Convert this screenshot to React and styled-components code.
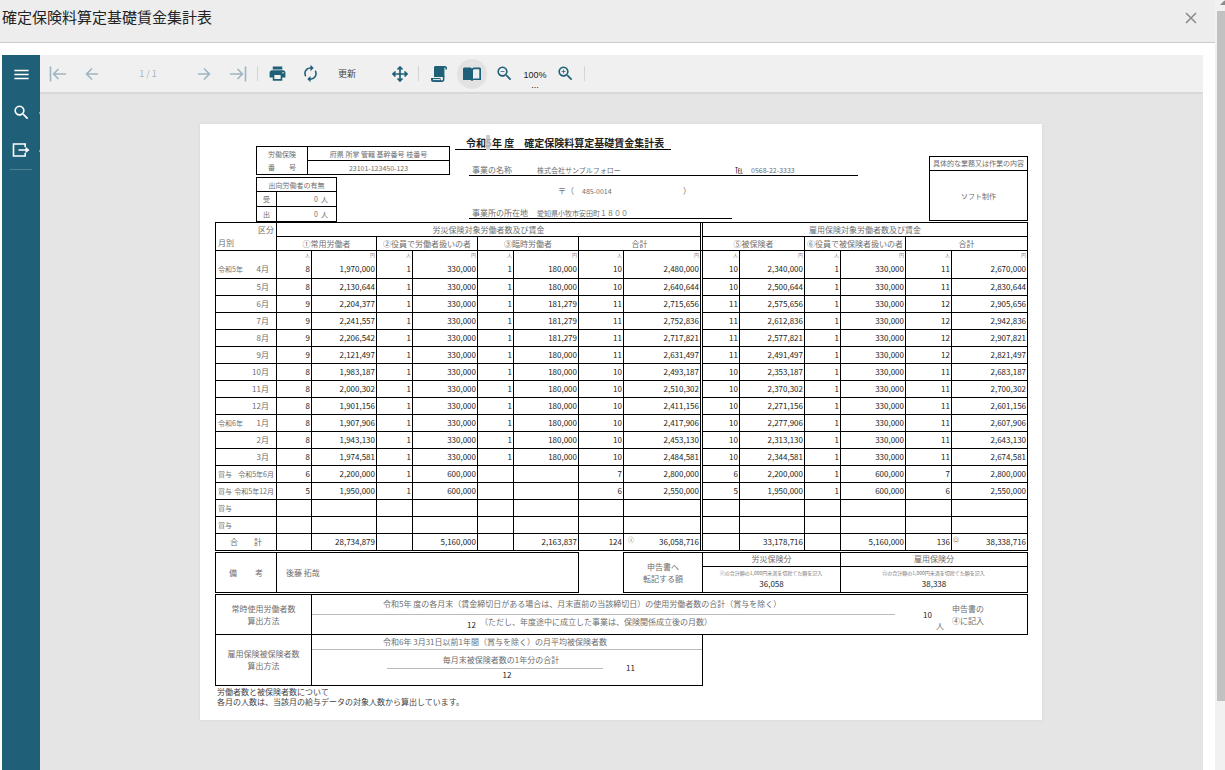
import React from "react";
import styled, { createGlobalStyle } from "styled-components";
import { MdPrint, MdAutorenew, MdMenu, MdSearch, MdOutlineZoomIn, MdOutlineZoomOut } from "react-icons/md";

//*********************************************************
// Data
//*********************************************************
const COLUMNS = [61, 35, 65, 36, 65, 36, 65, 45, 77, 2, 37, 65, 36, 65, 46, 76];

const MONTHS = [
	["令和5年", "4月", "8", "1,970,000", "1", "330,000", "1", "180,000", "10", "2,480,000", "10", "2,340,000", "1", "330,000", "11", "2,670,000"],
	["", "5月", "8", "2,130,644", "1", "330,000", "1", "180,000", "10", "2,640,644", "10", "2,500,644", "1", "330,000", "11", "2,830,644"],
	["", "6月", "9", "2,204,377", "1", "330,000", "1", "181,279", "11", "2,715,656", "11", "2,575,656", "1", "330,000", "12", "2,905,656"],
	["", "7月", "9", "2,241,557", "1", "330,000", "1", "181,279", "11", "2,752,836", "11", "2,612,836", "1", "330,000", "12", "2,942,836"],
	["", "8月", "9", "2,206,542", "1", "330,000", "1", "181,279", "11", "2,717,821", "11", "2,577,821", "1", "330,000", "12", "2,907,821"],
	["", "9月", "9", "2,121,497", "1", "330,000", "1", "180,000", "11", "2,631,497", "11", "2,491,497", "1", "330,000", "12", "2,821,497"],
	["", "10月", "8", "1,983,187", "1", "330,000", "1", "180,000", "10", "2,493,187", "10", "2,353,187", "1", "330,000", "11", "2,683,187"],
	["", "11月", "8", "2,000,302", "1", "330,000", "1", "180,000", "10", "2,510,302", "10", "2,370,302", "1", "330,000", "11", "2,700,302"],
	["", "12月", "8", "1,901,156", "1", "330,000", "1", "180,000", "10", "2,411,156", "10", "2,271,156", "1", "330,000", "11", "2,601,156"],
	["令和6年", "1月", "8", "1,907,906", "1", "330,000", "1", "180,000", "10", "2,417,906", "10", "2,277,906", "1", "330,000", "11", "2,607,906"],
	["", "2月", "8", "1,943,130", "1", "330,000", "1", "180,000", "10", "2,453,130", "10", "2,313,130", "1", "330,000", "11", "2,643,130"],
	["", "3月", "8", "1,974,581", "1", "330,000", "1", "180,000", "10", "2,484,581", "10", "2,344,581", "1", "330,000", "11", "2,674,581"]
];

const BONUSES = [
	["賞与", "令和5年6月", "6", "2,200,000", "1", "600,000", "", "", "7", "2,800,000", "6", "2,200,000", "1", "600,000", "7", "2,800,000"],
	["賞与", "令和5年12月", "5", "1,950,000", "1", "600,000", "", "", "6", "2,550,000", "5", "1,950,000", "1", "600,000", "6", "2,550,000"],
	["賞与", "", "", "", "", "", "", "", "", "", "", "", "", "", "", ""],
	["賞与", "", "", "", "", "", "", "", "", "", "", "", "", "", "", ""]
];

const TOTALS = ["", "28,734,879", "", "5,160,000", "", "2,163,837", "124", "36,058,716", "", "33,178,716", "", "5,160,000", "136", "38,338,716"];

//*********************************************************
// Styles
//*********************************************************
const GlobalStyle = createGlobalStyle`
	* {
		box-sizing: border-box;
	}

	body {
		margin: 0;
		background: #fff;
		font-family: "Noto Sans CJK JP", "Noto Sans", sans-serif;
	}

	button,
	input {
		margin: 0;
		padding: 0;
		border: 0;
		background: none;
		font-family: inherit;
	}
`;

const Screen = styled.div`
	display: flex;
	height: 100vh;
	overflow: hidden;
`;

const Dialog = styled.main`
	display: flex;
	flex: 1;
	flex-direction: column;
	min-width: 0;
`;

const DialogHeader = styled.header`
	display: flex;
	align-items: flex-start;
	justify-content: space-between;
	height: 43px;
	padding: 6px 18px 0 2px;
	background: #ededed;
	border-bottom: 1px solid #ccc;
`;

const DialogTitle = styled.h1`
	margin: 0;
	font-size: 15px;
	font-weight: 400;
	line-height: 22px;
	color: #222;
`;

const CloseButton = styled.button`
	display: flex;
	padding: 6px 0;
	color: #8c8c8c;
`;

const ScrollRail = styled.div`
	display: flex;
	flex-direction: column;
	width: 10px;
	padding-left: 2px;
	background: #f1f1f1;
	overflow: hidden;
`;

const ScrollArrow = styled.svg`
	flex: none;
	width: 8px;
	height: 11px;
`;

const ScrollThumb = styled.div`
	flex: 10;
	background: #c1c1c1;
`;

const ScrollRest = styled.div`
	flex: 1;
`;

const Viewer = styled.div`
	display: flex;
	flex: 1;
	min-height: 0;
	margin: 12px 12px 0 2px;
`;

const Sidebar = styled.nav`
	display: flex;
	flex-direction: column;
	align-items: center;
	width: 38px;
	background: #205f78;
`;

const SideButton = styled.button`
	position: relative;
	display: flex;
	align-items: center;
	justify-content: center;
	width: 38px;
	height: 38px;
	color: #fff;

	&::after {
		content: "";
		position: absolute;
		right: 0;
		bottom: 17px;
		width: 1px;
		height: 2px;
		background: ${({ $more }) => ($more ? "#7fa5b3" : "transparent")};
	}
`;

const SideRule = styled.div`
	width: 22px;
	height: 1px;
	background: #4f8296;
`;

const Pane = styled.div`
	display: flex;
	flex: 1;
	flex-direction: column;
	min-width: 0;
`;

const Toolbar = styled.div`
	display: flex;
	align-items: center;
	height: 39px;
	padding-left: 1px;
	background: #f0f0f0;
	border-bottom: 2px solid #d8d8d8;
`;

const ToolButton = styled.button`
	display: flex;
	flex: none;
	align-items: center;
	justify-content: center;
	width: ${({ $nav }) => ($nav ? "34px" : "33px")};
	height: 30px;
	color: #205f78;

	&:disabled {
		color: #9db6c1;
	}
`;

const RoundMark = styled.span`
	display: flex;
	flex: none;
	align-items: center;
	justify-content: center;
	width: 30px;
	height: 30px;
	border-radius: 50%;
	background: #e2e2e2;
`;

const PageInput = styled.input`
	width: 78px;
	font-size: 9px;
	line-height: 12px;
	text-align: center;
	color: #a9b3b8;
`;

const RefreshButton = styled.button`
	width: 56px;
	padding-left: 11px;
	font-size: 9px;
	line-height: 12px;
	text-align: left;
	color: #444;
`;

const ZoomButton = styled.button`
	width: 28px;
	padding-top: 10px;
	font-family: "Liberation Sans", Arial, sans-serif;
	font-size: 9px;
	line-height: 12px;
	color: #222;
`;

const ZoomMore = styled.span`
	display: block;
	line-height: 8px;
`;

const Divider = styled.div`
	width: 1px;
	height: 15px;
	margin: 0 3px 0 2px;
	background: #d0d5d7;
`;

const Canvas = styled.div`
	flex: 1;
	min-height: 0;
	padding: 30px 1px 0 0;
	background: #e5e5e5;
	overflow: hidden;
`;

const Sheet = styled.article`
	width: 100%;
	max-width: 842px;
	min-height: 596px;
	margin: 0 auto;
	padding: 0 14px 0 15px;
	background: #fff;
	box-shadow: 0 0 3px #d4d4d4;
	font-size: 8px;
	line-height: 12px;
	color: #6e6e6e;
	white-space: nowrap;
`;

const SheetHead = styled.div`
	display: flex;
	height: 98px;
	padding-left: 41px;
`;

const HeadLeft = styled.div`
	width: 194px;
	padding-top: 22px;
`;

const SmallTable = styled.table`
	width: ${({ $narrow }) => ($narrow ? "81px" : "100%")};
	margin-bottom: 2px;
	border: solid #000;
	border-width: 1px 0 0 1px;
	border-spacing: 0;
	table-layout: fixed;
	font-size: 7px;
	line-height: 12px;

	th,
	td {
		height: ${({ $narrow }) => ($narrow ? "15px" : "14px")};
		padding: 0;
		border: solid #000;
		border-width: 0 1px 1px 0;
		font-weight: 400;
		text-align: center;
	}

	th[colspan] {
		height: 14px;
	}

	th:first-child:not([colspan]) {
		width: ${({ $narrow }) => ($narrow ? "20px" : "51px")};
		line-height: 13px;
	}
`;

const PeopleCell = styled.td`
	&& {
		padding-right: 8px;
		text-align: right;
	}
`;

const HeadCenter = styled.div`
	flex: 1;
	min-width: 0;
	padding-left: 5px;
`;

const SheetTitle = styled.h2`
	width: 216px;
	margin: 0;
	padding: 12px 0 0 11px;
	border-bottom: 1px solid #000;
	font-size: 10px;
	font-weight: 700;
	line-height: 13px;
	color: #222;
`;

const YearMark = styled.mark`
	background: linear-gradient(90deg, #ccc 70%, transparent 70%);
	color: #aaa;
`;

const Field = styled.div`
	display: flex;
	align-items: flex-end;
	width: ${({ $short }) => ($short ? "263px" : "389px")};
	height: ${({ $short }) => ($short ? "23px" : "26px")};
	margin-left: 14px;
	padding-left: 3px;
	border-bottom: 1px solid #000;
	line-height: 10px;
`;

const FieldLabel = styled.span`
	width: 65px;
`;

const FieldValue = styled.span`
	width: ${({ $wide }) => ($wide ? "198px" : "auto")};
	font-size: 7px;
`;

const TelMark = styled.span`
	width: 16px;
	color: #111;
`;

const Postal = styled.div`
	display: flex;
	margin: 10px 0 0 103px;
	line-height: 10px;
`;

const PostalCode = styled.span`
	width: 109px;
	padding-left: 8px;
	font-size: 7px;
`;

const WorkBox = styled.section`
	display: flex;
	flex-direction: column;
	width: 99px;
	height: 65px;
	margin-top: 32px;
	border: 1px solid #000;
	font-size: 7px;
	text-align: center;
`;

const WorkTitle = styled.div`
	height: 14px;
	border-bottom: 1px solid #000;
`;

const WorkBody = styled.div`
	display: flex;
	flex: 1;
	align-items: center;
	justify-content: center;
`;

const WageTable = styled.table`
	width: 100%;
	border: solid #000;
	border-width: 1px 0 0 1px;
	border-spacing: 0;
	table-layout: fixed;

	th,
	td {
		height: 17px;
		padding: 0 1px;
		border: solid #000;
		border-width: 0 1px 1px 0;
		font-weight: 400;
	}

	thead th {
		height: 14px;
		padding: 0;
	}
`;

const CornerHead = styled.th`
	line-height: 13px;
	vertical-align: top;
`;

const CornerText = styled.div`
	padding: 0 2px;
	text-align: ${({ $align }) => $align};
`;

const PeriodHead = styled.th`
	vertical-align: ${({ $first }) => ($first ? "bottom" : "middle")};
`;

const Period = styled.div`
	display: flex;
	justify-content: space-between;
	padding: ${({ $first }) => ($first ? "0 0 3px 1px" : "0 0 0 1px")};
	font-size: 7px;
`;

const MonthName = styled.span`
	padding-right: ${({ $bonus }) => ($bonus ? "1px" : "6px")};
	font-size: ${({ $bonus }) => ($bonus ? "7px" : "8px")};
`;

const TotalLabel = styled.div`
	display: flex;
	justify-content: space-between;
	padding: 0 13px;
`;

const NumberCell = styled.td`
	text-align: right;
	color: #1c1c1c;
`;

const Unit = styled.div`
	margin-bottom: 4px;
	font-size: 5px;
	line-height: 8px;
	color: #888;
`;

const FirstValue = styled.div`
	margin-bottom: 3px;
`;

const MarkedValue = styled.div`
	display: flex;
	justify-content: space-between;
`;

const CircleMark = styled.span`
	padding-left: ${({ $inset }) => ($inset ? "3px" : "0")};
	font-size: 6px;
	line-height: 8px;
	color: #666;
`;

const Summary = styled.div`
	display: grid;
	grid-template-columns: 364fr 44fr 405fr;
	margin-top: 1px;
`;

const RemarkBox = styled.div`
	display: flex;
	align-items: stretch;
	height: 41px;
	border: 1px solid #000;
	line-height: 39px;
`;

const RemarkLabel = styled.div`
	display: flex;
	justify-content: space-between;
	width: 61px;
	padding: 0 13px;
	border-right: 1px solid #000;
`;

const RemarkText = styled.div`
	padding-left: 9px;
	font-size: 8px;
`;

const TransferBox = styled.div`
	display: grid;
	grid-column: 3;
	grid-template-columns: 78fr 138fr 187fr;
	height: 41px;
	border: 1px solid #000;
	text-align: center;
`;

const TransferLabel = styled.div`
	display: flex;
	flex-direction: column;
	justify-content: center;
`;

const TransferAmount = styled.div`
	border-left: 1px solid #000;
	color: #1c1c1c;
`;

const TransferHead = styled.div`
	height: 14px;
	border-bottom: 1px solid #000;
	color: #6e6e6e;
`;

const TransferNote = styled.div`
	padding-right: 1px;
	font-size: 5px;
	line-height: 11px;
	color: #777;
`;

const Method = styled.div`
	display: flex;
	width: ${({ $half }) => ($half ? "60%" : "100%")};
	height: ${({ $half }) => ($half ? "51px" : "41px")};
	margin-top: ${({ $half }) => ($half ? "0" : "1px")};
	border: 1px solid #000;
	border-top-width: ${({ $half }) => ($half ? "0" : "1px")};
`;

const MethodLabel = styled.div`
	display: flex;
	flex: none;
	flex-direction: column;
	justify-content: center;
	width: 96px;
	border-right: 1px solid #000;
	text-align: center;
`;

const MethodBody = styled.div`
	flex: 1;
	min-width: 0;
`;

const Condition = styled.div`
	height: ${({ $low }) => ($low ? "15px" : "20px")};
	padding-left: 71px;
	border-bottom: 1px solid #bbb;
	line-height: ${({ $low }) => ($low ? "13px" : "18px")};
`;

const Divisor = styled.div`
	display: flex;
	gap: 4px;
	padding-left: 155px;
	line-height: 13px;
`;

const Figure = styled.span`
	padding-top: ${({ $drop }) => ($drop ? "3px" : "0")};
	color: #1c1c1c;
`;

const Result = styled.div`
	display: flex;
	flex: none;
	align-items: center;
	gap: 4px;
	width: 132px;
	padding-left: 28px;
`;

const ResultUnit = styled.span`
	align-self: flex-end;
	padding: 0 4px 2px 0;
`;

const FormulaRow = styled.div`
	display: flex;
	align-items: center;
	gap: 23px;
	height: 35px;
	padding-left: 75px;
`;

const Fraction = styled.div`
	width: 216px;
	text-align: center;
`;

const FractionTop = styled.div`
	height: 18px;
	padding-left: 12px;
	border-bottom: 1px solid #bbb;
	line-height: 17px;
`;

const FractionBottom = styled.div`
	height: 16px;
	padding-left: 24px;
	color: #1c1c1c;
`;

const Notes = styled.p`
	margin: 1px 0 0;
	padding-left: 2px;
	line-height: 10px;
	color: #444;
`;

//*********************************************************
// Icons
//*********************************************************
const ArrowIcon = ({ back, edge }) => (
	<svg
		width="18"
		height="18"
		viewBox="0 0 18 18"
		fill="none"
		stroke="currentColor"
		strokeWidth="1.6"
		transform={back ? undefined : "scale(-1 1)"}
	>
		{edge ? <path d="M1.5 1.5v15M17 9H4.5M9.5 4l-5 5 5 5"/> : <path d="M15 9H4M9 3.5L3.5 9 9 14.5"/>}
	</svg>
);

const MoveIcon = () => (
	<svg width="16" height="16" viewBox="0 0 16 16" fill="none" stroke="currentColor" strokeWidth="1.7">
		<path d="M8 1.5v13M1.5 8h13M5.5 3.5L8 1l2.5 2.5M5.5 12.5L8 15l2.5-2.5M3.5 5.5L1 8l2.5 2.5M12.5 5.5L15 8l-2.5 2.5"/>
	</svg>
);

const ScrollIcon = () => (
	<svg width="16" height="16" viewBox="0 0 16 16" fill="currentColor">
		<path d="M4.5 0H14a2 2 0 0 1 2 2v1.6h-1.6V2c0-.4-.2-.6-.5-.6s-.5.2-.5.6v9H3V1.5C3 .6 3.6 0 4.500 0z"/>
		<path d="M0 12h9.500v1.200c0 .7.5 1.200 1.200 1.200s1.200-.5 1.200-1.200V10h1.500v3.200A2.600 2.600 0 0 1 10.800 16H2.500A2.500 2.500 0 0 1 0 13.500z"/>
		<path d="M2 13.600h7" stroke="#f0f0f0" strokeWidth="1"/>
	</svg>
);

const BookIcon = () => (
	<svg width="18" height="14" viewBox="0 0 18 14">
		<path d="M1.500.5H7.500L9 1.500 10.500.5h6c.8 0 1.500.6 1.500 1.400V13h-7.500L9 14l-1.500-1H0V1.900C0 1.100.7.5 1.500.5z" fill="currentColor"/>
		<path d="M10 3.100l1-.8h5.300v9.200H11l-1 .5z" fill="#e9eef0"/>
	</svg>
);

const ExportIcon = () => (
	<svg width="18" height="14" viewBox="0 0 18 14" fill="none" stroke="currentColor" strokeWidth="1.600">
		<path d="M13.200 4V1H1.500v12h11.700v-3M6.500 7H16"/>
		<path d="M13.500 3.800L17.500 7l-4 3.200z" fill="currentColor" stroke="none"/>
	</svg>
);

//*********************************************************
// Components
//*********************************************************
const TopBar = () => (
	<Toolbar>
		<ToolButton $nav disabled aria-label="最初のページ"><ArrowIcon back edge/></ToolButton>
		<ToolButton $nav disabled aria-label="前のページ"><ArrowIcon back/></ToolButton>
		<PageInput type="text" aria-label="ページ" value="1 / 1" readOnly/>
		<ToolButton $nav disabled aria-label="次のページ"><ArrowIcon/></ToolButton>
		<ToolButton $nav disabled aria-label="最後のページ"><ArrowIcon edge/></ToolButton>
		<Divider/>
		<ToolButton aria-label="印刷"><MdPrint size={19}/></ToolButton>
		<ToolButton aria-label="再読み込み"><MdAutorenew size={19}/></ToolButton>
		<RefreshButton>更新</RefreshButton>
		<ToolButton aria-label="移動"><MoveIcon/></ToolButton>
		<Divider/>
		<ToolButton aria-label="連続表示"><ScrollIcon/></ToolButton>
		<ToolButton aria-label="見開き表示"><RoundMark><BookIcon/></RoundMark></ToolButton>
		<ToolButton aria-label="縮小"><MdOutlineZoomOut size={19}/></ToolButton>
		<ZoomButton>100%<ZoomMore>...</ZoomMore></ZoomButton>
		<ToolButton aria-label="拡大"><MdOutlineZoomIn size={19}/></ToolButton>
		<Divider/>
	</Toolbar>
);

const WageRow = ({ row, first, bonus }) => {
	const [period, month, ...values] = row;
	const cells = values.map((value, i) => (
		<NumberCell key={i}>
			{first ? (
				<>
					<Unit>{i % 2 ? "円" : "人"}</Unit>
					<FirstValue>{value}</FirstValue>
				</>
			) : value}
		</NumberCell>
	));

	return (
		<tr>
			<PeriodHead scope="row" $first={first}>
				<Period $first={first}>
					<span>{period}</span>
					<MonthName $bonus={bonus}>{month}</MonthName>
				</Period>
			</PeriodHead>
			{cells.slice(0, 8)}
			{first && <td rowSpan={17}/>}
			{cells.slice(8)}
		</tr>
	);
};

const totalCell = (value, i) => {
	if (i !== 7 && i !== 13) {
		return <NumberCell key={i}>{value}</NumberCell>;
	}
	return (
		<NumberCell key={i}>
			<MarkedValue>
				<CircleMark $inset={i === 7}>{i === 7 ? "㋑" : "㋺"}</CircleMark>
				<span>{value}</span>
			</MarkedValue>
		</NumberCell>
	);
};

const Wages = () => (
	<WageTable>
		<colgroup>
			{COLUMNS.map((width, i) => <col key={i} width={width}/>)}
		</colgroup>
		<thead>
			<tr>
				<CornerHead rowSpan={2}>
					<CornerText $align="right">区分</CornerText>
					<CornerText $align="left">月別</CornerText>
				</CornerHead>
				<th colSpan={8}>労災保険対象労働者数及び賃金</th>
				<th rowSpan={2}/>
				<th colSpan={6}>雇用保険対象労働者数及び賃金</th>
			</tr>
			<tr>
				<th colSpan={2}>①常用労働者</th>
				<th colSpan={2}>②役員で労働者扱いの者</th>
				<th colSpan={2}>③臨時労働者</th>
				<th colSpan={2}>合計</th>
				<th colSpan={2}>⑤被保険者</th>
				<th colSpan={2}>⑥役員で被保険者扱いの者</th>
				<th colSpan={2}>合計</th>
			</tr>
		</thead>
		<tbody>
			{MONTHS.map((row, i) => <WageRow key={row[1]} row={row} first={i === 0}/>)}
			{BONUSES.map((row, i) => <WageRow key={i} row={row} bonus/>)}
			<tr>
				<th scope="row"><TotalLabel><span>合</span><span>計</span></TotalLabel></th>
				{TOTALS.map(totalCell)}
			</tr>
		</tbody>
	</WageTable>
);

const ReportHead = () => (
	<SheetHead>
		<HeadLeft>
			<SmallTable>
				<tbody>
					<tr>
						<th rowSpan={2}>労働保険<br/>番　　号</th>
						<td>府県 所掌 管轄 基幹番号 枝番号</td>
					</tr>
					<tr><td>23101-123450-123</td></tr>
				</tbody>
			</SmallTable>
			<SmallTable $narrow>
				<tbody>
					<tr><th colSpan={4}>出向労働者の有無</th></tr>
					<tr><th>受</th><PeopleCell colSpan={3}>0&nbsp;&nbsp;人</PeopleCell></tr>
					<tr><th>出</th><PeopleCell colSpan={3}>0&nbsp;&nbsp;人</PeopleCell></tr>
				</tbody>
			</SmallTable>
		</HeadLeft>
		<HeadCenter>
			<SheetTitle>令和<YearMark>5</YearMark>年 度　確定保険料算定基礎賃金集計表</SheetTitle>
			<Field>
				<FieldLabel>事業の名称</FieldLabel>
				<FieldValue $wide>株式会社サンプルフォロー</FieldValue>
				<TelMark>℡</TelMark>
				<FieldValue>0568-22-3333</FieldValue>
			</Field>
			<Postal>〒（<PostalCode>485-0014</PostalCode>）</Postal>
			<Field $short>
				<FieldLabel>事業所の所在地</FieldLabel>
				<FieldValue>愛知県小牧市安田町１８００</FieldValue>
			</Field>
		</HeadCenter>
		<WorkBox>
			<WorkTitle>具体的な業務又は作業の内容</WorkTitle>
			<WorkBody>ソフト制作</WorkBody>
		</WorkBox>
	</SheetHead>
);

const ReportFoot = () => (
	<>
		<Summary>
			<RemarkBox>
				<RemarkLabel><span>備</span><span>考</span></RemarkLabel>
				<RemarkText>後藤 拓哉</RemarkText>
			</RemarkBox>
			<TransferBox>
				<TransferLabel><span>申告書へ</span><span>転記する額</span></TransferLabel>
				<TransferAmount>
					<TransferHead>労災保険分</TransferHead>
					<TransferNote>㋑の合計額の1,000円未満を切捨てた額を記入</TransferNote>
					36,058
				</TransferAmount>
				<TransferAmount>
					<TransferHead>雇用保険分</TransferHead>
					<TransferNote>㋺の合計額の1,000円未満を切捨てた額を記入</TransferNote>
					38,338
				</TransferAmount>
			</TransferBox>
		</Summary>
		<Method>
			<MethodLabel><span>常時使用労働者数</span><span>算出方法</span></MethodLabel>
			<MethodBody>
				<Condition>令和5年 度の各月末（賃金締切日がある場合は、月末直前の当該締切日）の使用労働者数の合計（賞与を除く）</Condition>
				<Divisor>
					<Figure $drop>12</Figure>
					<span>（ただし、年度途中に成立した事業は、保険関係成立後の月数）</span>
				</Divisor>
			</MethodBody>
			<Result>
				<Figure>10</Figure>
				<ResultUnit>人</ResultUnit>
				<span>申告書の<br/>④に記入</span>
			</Result>
		</Method>
		<Method $half>
			<MethodLabel><span>雇用保険被保険者数</span><span>算出方法</span></MethodLabel>
			<MethodBody>
				<Condition $low>令和6年 3月31日以前1年間（賞与を除く）の月平均被保険者数</Condition>
				<FormulaRow>
					<Fraction>
						<FractionTop>毎月末被保険者数の1年分の合計</FractionTop>
						<FractionBottom>12</FractionBottom>
					</Fraction>
					<Figure>11</Figure>
				</FormulaRow>
			</MethodBody>
		</Method>
		<Notes>
			労働者数と被保険者数について<br/>
			各月の人数は、当該月の給与データの対象人数から算出しています。
		</Notes>
	</>
);

const App = () => (
	<Screen>
		<GlobalStyle/>
		<Dialog>
			<DialogHeader>
				<DialogTitle>確定保険料算定基礎賃金集計表</DialogTitle>
				<CloseButton aria-label="閉じる">
					<svg width="12" height="12" viewBox="0 0 12 12" stroke="currentColor" strokeWidth="1.600">
						<path d="M1 1l10 10M11 1L1 11"/>
					</svg>
				</CloseButton>
			</DialogHeader>
			<Viewer>
				<Sidebar>
					<SideButton aria-label="メニュー"><MdMenu size={19}/></SideButton>
					<SideButton $more aria-label="検索"><MdSearch size={19}/></SideButton>
					<SideButton $more aria-label="エクスポート"><ExportIcon/></SideButton>
					<SideRule/>
				</Sidebar>
				<Pane>
					<TopBar/>
					<Canvas>
						<Sheet>
							<ReportHead/>
							<Wages/>
							<ReportFoot/>
						</Sheet>
					</Canvas>
				</Pane>
			</Viewer>
		</Dialog>
		<ScrollRail>
			<ScrollArrow viewBox="0 0 8 11" fill="#8a8a8a"><path d="M3 5l4.500-4.500L12 5z"/></ScrollArrow>
			<ScrollThumb/>
			<ScrollRest/>
		</ScrollRail>
	</Screen>
);

export default App;
